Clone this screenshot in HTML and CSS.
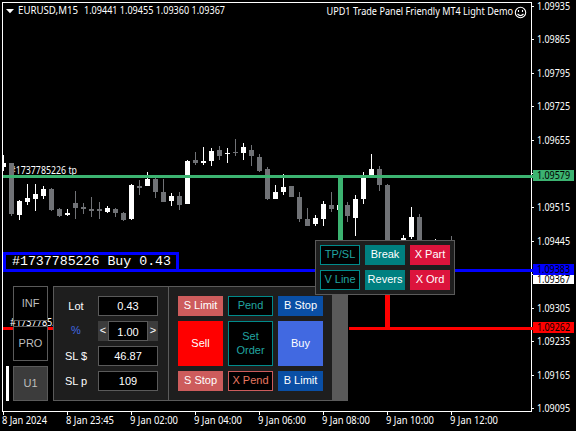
FILE: index.html
```html
<!DOCTYPE html>
<html lang="en">
<head>
<meta charset="utf-8">
<title>EURUSD,M15</title>
<link rel="stylesheet" href="styles.css">
</head>
<body>
<main class="terminal">
  <svg class="chart" width="576" height="431" viewBox="0 0 576 431">
    <text x="10" y="174" textLength="67" lengthAdjust="spacingAndGlyphs">#1737785226 tp</text>
    <g id="candles" shape-rendering="crispEdges"></g>
    <g shape-rendering="crispEdges">
      <path class="frame" d="M2 2h530v410H2zM3 3v408h528V3z" fill-rule="evenodd"/>
      <path class="tp" d="M3 175h530v3H3zM338 178h5v80h-5z"/>
      <path class="entry" d="M3 269h530v3H3z"/>
      <path class="sl" d="M3 327h50v3H3zM349 327h184v3H349zM385 290h5v37h-5z"/>
    </g>
    <path class="frame" d="M6 9h8l-4 4.2z"/>
    <text x="18" y="14" textLength="60" lengthAdjust="spacingAndGlyphs">EURUSD,M15</text>
    <text x="84" y="14" textLength="141" lengthAdjust="spacingAndGlyphs">1.09441 1.09455 1.09360 1.09367</text>
    <text x="326.500" y="15" textLength="186.500" lengthAdjust="spacingAndGlyphs">UPD1 Trade Panel Friendly MT4 Light Demo</text>
    <g class="smile">
      <circle cx="520.500" cy="12.500" r="5.200"/>
      <path d="M517.500 14q3 3.200 6 0M518.500 10v2M522.500 10v2"/>
    </g>
    <text x="10" y="326" textLength="67" lengthAdjust="spacingAndGlyphs">#1737785226 sl</text>
    <g id="axes"></g>
  </svg>

  <div class="order-label">#1737785226 Buy 0.43</div>

  <nav class="tabs">
    <button class="tab">INF</button>
    <button class="tab">PRO</button>
    <button class="tab tab-active">U1</button>
  </nav>

  <section class="panel">
    <div class="fields">
      <div class="field"><span>Lot</span><b class="value">0.43</b></div>
      <div class="field"><span class="percent">%</span><div class="spin"><i>&lt;</i><b class="value">1.00</b><i>&gt;</i></div></div>
      <div class="field"><span>SL $</span><b class="value">46.87</b></div>
      <div class="field"><span>SL p</span><b class="value">109</b></div>
    </div>
    <div class="orders">
      <button class="btn coral">S Limit</button>
      <button class="btn outline">Pend</button>
      <button class="btn navy">B Stop</button>
      <button class="btn red">Sell</button>
      <button class="btn outline">Set<br>Order</button>
      <button class="btn royal">Buy</button>
      <button class="btn coral">S Stop</button>
      <button class="btn outline-coral">X Pend</button>
      <button class="btn navy">B Limit</button>
    </div>
    <div class="handle"></div>
  </section>

  <section class="float">
    <button class="btn outline">TP/SL</button>
    <button class="btn teal">Break</button>
    <button class="btn crimson">X Part</button>
    <button class="btn outline">V Line</button>
    <button class="btn teal">Revers</button>
    <button class="btn crimson">X Ord</button>
  </section>
</main>
<script src="chart.js"></script>
</body>
</html>
```
FILE: styles.css
```css
* { box-sizing: border-box; }
body { margin: 0; background: #000; }
.terminal {
  position: relative;
  width: 576px;
  height: 431px;
  overflow: hidden;
  background: #000;
  font: 11px/14px "Liberation Sans", Arial, sans-serif;
  color: #fff;
}
.chart { display: block; }
.chart text { font: 10px "Noto Sans", sans-serif; fill: #fff; }
.chart .dark { fill: #000; }
.frame, .up { fill: #fff; }
.down { fill: #707276; }
.tp { fill: #3cb371; }
.entry { fill: #00f; }
.sl { fill: #f00; }
.smile { fill: none; stroke: #fff; stroke-width: 1.1; }

.order-label {
  position: absolute;
  left: 3px;
  top: 252px;
  width: 176px;
  height: 20px;
  padding-left: 6px;
  border: 3px solid #00f;
  background: #000;
  font: 13.25px/14px "Liberation Mono", monospace;
  white-space: nowrap;
}

.tabs {
  position: absolute;
  left: 6px;
  top: 286px;
  display: flex;
  flex-direction: column;
  gap: 5px;
}
button { margin: 0; padding: 0; font: inherit; color: inherit; }
.tab {
  width: 35px;
  height: 35px;
  margin-left: 7px;
  padding-bottom: 2px;
  border: 1px solid #5a5a5a;
  background: #000;
  color: #bebebe;
}
.tab-active {
  width: 42px;
  margin-left: 0;
  border: 0;
  padding-left: 7px;
  background: linear-gradient(90deg, #fff 3px, #000 3px 7px, #5a5a5a 7px 8px, transparent 8px 41px, #5a5a5a 41px),
    linear-gradient(#5a5a5a 1px, #3c3c3c 1px 34px, #5a5a5a 34px);
}

.panel {
  position: absolute;
  left: 53px;
  top: 286px;
  width: 295px;
  height: 115px;
  display: flex;
  border: 1px solid #5a5a5a;
  border-right: 0;
  background: #1e1e1e;
}
.fields {
  width: 115px;
  padding: 9px 10px 9px 0;
  display: grid;
  gap: 5px;
  border-right: 1px solid #5a5a5a;
}
.field { display: grid; grid-template-columns: 44px 60px; height: 20px; line-height: 20px; text-align: center; }
.percent { color: #4169e1; line-height: 18px; }
.value {
  display: block;
  height: 20px;
  border: 1px solid #5a5a5a;
  background: #000;
  font-weight: 400;
  line-height: 18px;
}
.spin { display: grid; grid-template-columns: 10px 40px 10px; }
.spin i { background: #3c3c3c; font-style: normal; line-height: 18px; }
.spin .value { line-height: 20px; }
.orders {
  flex: 1;
  padding: 9px;
  display: grid;
  grid-template-columns: repeat(3, 45px);
  grid-template-rows: 20px 45px 20px;
  gap: 5px;
}
.handle { width: 16px; background: #5a5a5a; }

.float {
  position: absolute;
  left: 315px;
  top: 240px;
  width: 140px;
  height: 55px;
  padding: 4px;
  display: grid;
  grid-template-columns: repeat(3, 40px);
  grid-template-rows: 20px 20px;
  gap: 5px;
  border: 1px solid #5a5a5a;
  background: #1e1e1e;
}
.btn { border: 0; white-space: nowrap; padding-bottom: 2px; }
.outline { border: 1px solid #008b8b; background: #000; color: #20a5a0; }
.outline-coral { border: 1px solid #cd5c5c; background: #000; color: #e87860; }
.coral { background: #cd5c5c; }
.navy { background: #0a4fa5; }
.red { background: #f00; }
.royal { background: #4169e1; }
.teal { background: #008080; }
.crimson { background: #dc143c; }
```
FILE: chart.js
```js
// [slot, high, low, body top, body bottom, rising]; each slot is 8px wide
const candles = [
  [0,155,171,163,167,1],[1,163,216,163,214,0],[2,200,220,201,215,1],[3,184,205,198,202,1],
  [4,184,211,194,199,1],[5,186,199,189,196,1],[6,188,211,189,210,0],[7,208,217,209,216,0],
  [8,209,216,213,215,1],[9,191,219,203,208,0],[10,203,214,207,209,0],[11,197,217,209,211,0],
  [12,202,219,209,211,0],[13,206,213,208,212,1],[14,208,217,209,213,0],[15,212,221,213,220,0],
  [16,184,220,185,219,1],[17,180,195,186,188,0],[18,172,186,179,186,1],[19,178,198,179,192,0],
  [20,179,202,192,202,0],[21,193,206,196,201,1],[22,192,210,196,205,0],[23,160,204,161,204,1],
  [24,152,165,160,163,0],[25,147,165,161,163,1],[26,148,166,151,161,1],[27,146,160,150,156,0],
  [28,148,163,153,154,1],[29,139,156,152,153,0],[30,143,160,147,153,1],[31,145,166,150,156,0],
  [32,154,172,157,171,0],[33,167,200,169,199,0],[34,185,199,192,199,1],[35,174,195,187,192,1],
  [36,186,197,186,197,0],[37,192,222,197,219,0],[38,208,226,219,226,0],[39,215,226,218,224,1],
  [40,201,226,204,219,1],[41,192,212,205,209,0],[42,205,210,205,210,1],[43,202,222,205,216,0],
  [44,195,236,199,218,1],[45,172,204,175,199,1],[46,154,176,169,176,1],[47,166,191,169,185,0],
  [48,184,250,185,250,0],[50,235,245,238,245,1],[51,207,239,217,237,1],[52,214,250,217,250,0],
  [54,239,245,242,245,1],[56,236,245,242,245,0]
];
document.getElementById('candles').innerHTML = candles.map(([i, hi, lo, top, bottom, up]) => {
  const x = 3 + i * 8;
  const left = i ? x - 2 : x;
  return `<path class="${up ? 'up' : 'down'}" d="M${x} ${hi}h1V${lo}h-1z"/>` +
    `<path class="${up ? 'up' : 'down'}" d="M${left} ${top}H${x + 3}V${bottom}H${left}z"/>`;
}).join('');

const label = (x, y, width, text, cls = '') =>
  `<text class="${cls}" x="${x}" y="${y}" textLength="${width}" lengthAdjust="spacingAndGlyphs">${text}</text>`;
const box = (x, y, w, h, cls) =>
  `<rect class="${cls}" x="${x}" y="${y}" width="${w}" height="${h}" shape-rendering="crispEdges"/>`;

const prices = [[6,'1.09935'],[39,'1.09865'],[73,'1.09795'],[106,'1.09725'],[140,'1.09655'],[173,''],
  [207,'1.09515'],[241,'1.09445'],[274,''],[308,'1.09305'],[341,'1.09235'],[375,'1.09165'],[408,'1.09095']];
const times = [['8 Jan 2024',45],['8 Jan 23:45',48],['9 Jan 02:00',48],['9 Jan 04:00',48],
  ['9 Jan 06:00',48],['9 Jan 08:00',48],['9 Jan 10:00',48],['9 Jan 12:00',48]];
// [tag top, height, price, tag style, text baseline]
const tags = [[275,9,'1.09367','frame',283],[170,11,'1.09579','tp',179],
  [264,11,'1.09383','entry',273],[322,11,'1.09262','sl',331]];

let out = '';
for (const [y, text] of prices) {
  out += box(532, y, 2, 1, 'frame');
  if (text) out += label(537, y + 4, 33, text);
}
times.forEach(([text, width], i) => {
  out += box(3 + i * 64, 412, 1, 3, 'frame') + label(2 + i * 64, 424, width, text);
});
for (const [y, h, text, cls, base] of tags) {
  out += box(533, y, 41, h, cls) + label(537, base, 33, text, 'dark');
}
document.getElementById('axes').innerHTML = out;
```
